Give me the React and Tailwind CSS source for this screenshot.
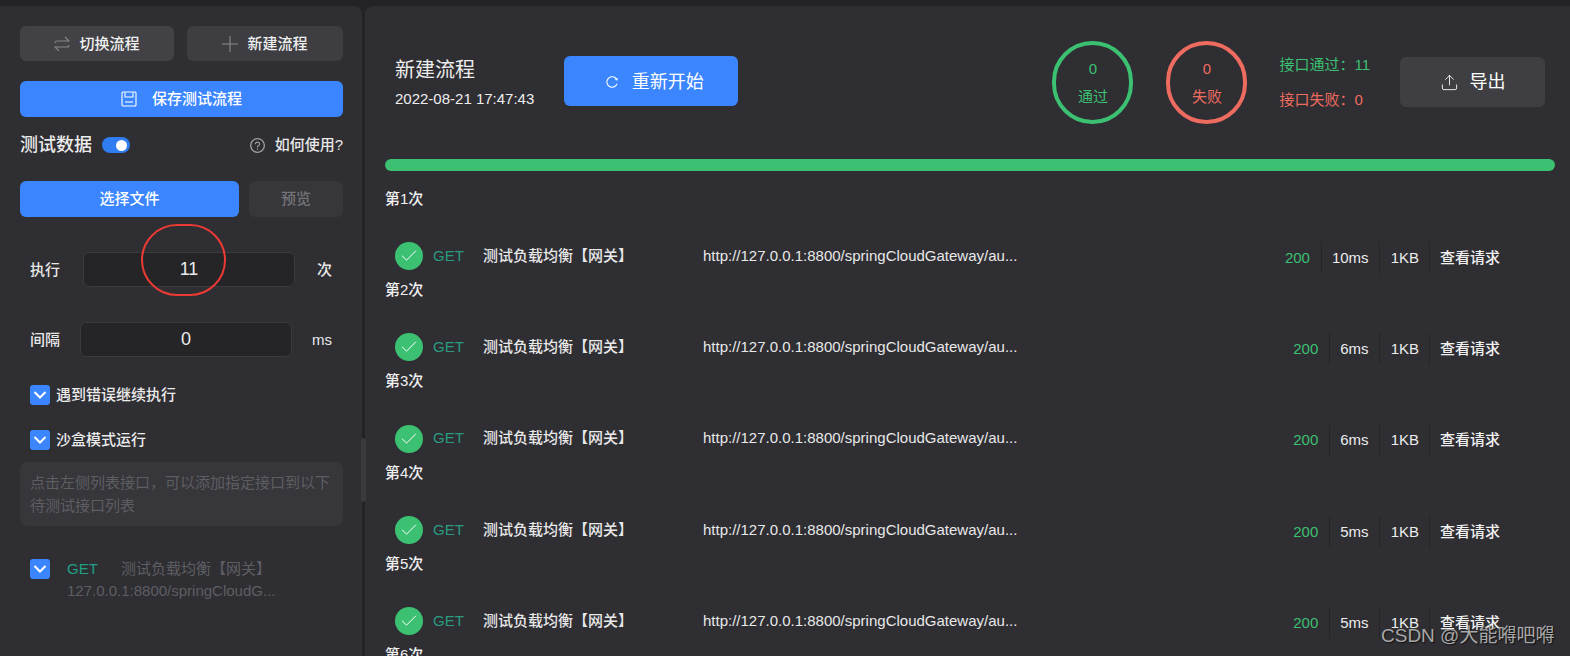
import { Check, Upload } from "lucide-react";
import { AiOutlineQuestionCircle, AiOutlineReload } from "react-icons/ai";

const runs = [
  { label: "第1次", time: "10ms" },
  { label: "第2次", time: "6ms" },
  { label: "第3次", time: "6ms" },
  { label: "第4次", time: "5ms" },
  { label: "第5次", time: "5ms" },
  { label: "第6次", time: "5ms" },
];

function SwapIcon() {
  return (
    <svg width="16" height="16" viewBox="0 0 16 16" fill="none" stroke="#85858a" strokeWidth="1.1">
      <path d="M1 7C1 5.5 2 5 3 5H15L11 1" />
      <path d="M15 9C15 10.5 14 11 13 11H1L5 15" />
    </svg>
  );
}

function SaveIcon() {
  return (
    <svg width="16" height="16" viewBox="0 0 16 16" fill="none" stroke="currentColor" strokeWidth="1.1">
      <rect x="1" y="1" width="14" height="14" rx="1" />
      <path d="M4 1.5V6H12V1.5" />
      <path d="M4 11H12" />
    </svg>
  );
}

function PlusIcon() {
  return (
    <svg width="16" height="16" viewBox="0 0 16 16" fill="none" stroke="#8c8c90" strokeWidth="1.1">
      <path d="M8 0V16M0 8H16" />
    </svg>
  );
}

function Tick() {
  return (
    <span className="flex h-5 w-5 shrink-0 items-center justify-center rounded-[3px] bg-[#3b86ff]">
      <svg width="14" height="10" viewBox="0 0 14 10" fill="none" stroke="white" strokeWidth="2">
        <path d="M1.5 2L7 7.5L12.5 2" />
      </svg>
    </span>
  );
}

function Run({ label, time }) {
  return (
    <div className="h-[91.25px] shrink-0">
      <div className="flex h-5 items-center text-[15px] font-medium text-[#f0f0f0]">{label}</div>
      <div className="mt-[31px] flex h-8 items-center text-[15px]">
        <span className="ml-[10px] flex h-7 w-7 items-center justify-center rounded-full bg-[#3cc071]">
          <Check size={20} strokeWidth={1.2} color="white" />
        </span>
        <span className="ml-[10px] w-[50px] text-[#2b9b80]">GET</span>
        <span className="w-[220px] font-medium text-[#e8e8e8]">测试负载均衡【网关】</span>
        <span className="font-medium text-[#e8e8e8]">http://127.0.0.1:8800/springCloudGateway/au...</span>
        <div className="ml-auto mt-[4px] flex h-8 items-center">
          <span className="pr-[11px] text-[#3cc071]">200</span>
          <span className="flex h-8 items-center border-l border-[#26262a] pl-[10px] pr-[10px] font-medium text-[#ececec]">{time}</span>
          <span className="flex h-8 items-center border-l border-[#26262a] pl-[11px] pr-[10px] font-medium text-[#ececec]">1KB</span>
          <span className="flex h-8 items-center border-l border-[#26262a] pl-[10px] pr-[55px] font-medium text-[#f0f0f0]">查看请求</span>
        </div>
      </div>
    </div>
  );
}

export default function App() {
  return (
    <div className="relative flex h-[656px] w-[1570px] gap-[3px] overflow-hidden bg-[#232326] pt-[6px] font-['Liberation_Sans','Noto_Sans_CJK_SC',sans-serif]">
      {/* left panel */}
      <aside className="relative h-full w-[362px] shrink-0 rounded-tr-lg bg-[#2e2e33] pt-5">
        <div className="flex gap-[13px] px-5 pr-[19px]">
          <button className="flex h-[35px] w-[154px] items-center justify-center gap-[9px] rounded-md bg-[#414146] pt-[1px] text-[15px] font-medium text-[#f0f0f0]">
            <SwapIcon />
            切换流程
          </button>
          <button className="flex h-[35px] w-[156px] items-center justify-center gap-[9px] rounded-md bg-[#3d3d42] pt-[1px] text-[15px] font-medium text-[#f0f0f0]">
            <PlusIcon />
            新建流程
          </button>
        </div>
        <div className="mt-5 px-5 pr-[19px]">
          <button className="flex h-[36px] w-full items-center justify-center gap-[15px] rounded-md bg-[#3b86ff] text-[15px] font-medium text-white">
            <SaveIcon />
            保存测试流程
          </button>
        </div>
        <div className="mt-[17px] flex h-[22px] items-center pl-5 pr-[19px]">
          <span className="text-lg font-medium text-[#ececec]">测试数据</span>
          <span className="ml-[10px] flex h-4 w-7 items-center justify-end rounded-full bg-[#2f7df0] pr-[3px]">
            <span className="h-[11px] w-[11px] rounded-full bg-white" />
          </span>
          <AiOutlineQuestionCircle size={17} className="ml-auto text-[#a0a0a4]" />
          <span className="ml-[9px] text-[15px] font-medium text-[#e8e8e8]">如何使用?</span>
        </div>
        <div className="mt-[25px] flex gap-[10px] pl-5 pr-[19px]">
          <button className="h-9 w-[219px] rounded-md bg-[#3b86ff] text-[15px] font-medium text-white">选择文件</button>
          <button className="h-9 w-[94px] rounded-md bg-[#36363b] text-[15px] font-medium text-[#747478]">预览</button>
        </div>
        <div className="mt-[35px] flex h-[35px] items-center text-[15px] font-medium text-[#e8e8e8]">
          <span className="ml-[30px] w-[53px] pt-[2px]">执行</span>
          <input readOnly value="11" className="h-[35px] w-[212px] rounded-md border border-[#3a3a3f] bg-[#252528] pb-[1px] text-center text-lg text-[#ececec] outline-none" />
          <span className="ml-[22px] pt-[2px]">次</span>
        </div>
        <div className="mt-[35px] flex h-[35px] items-center text-[15px] font-medium text-[#e8e8e8]">
          <span className="ml-[30px] w-[50px] pt-[2px]">间隔</span>
          <input readOnly value="0" className="h-[35px] w-[212px] rounded-md border border-[#3a3a3f] bg-[#252528] text-center text-lg text-[#ececec] outline-none" />
          <span className="ml-[20px] pt-[2px]">ms</span>
        </div>
        <label className="ml-[30px] mt-[28px] flex h-5 items-center gap-[6px] text-[15px] font-medium text-[#ececec]">
          <Tick />
          遇到错误继续执行
        </label>
        <label className="ml-[30px] mt-[25px] flex h-5 items-center gap-[6px] text-[15px] font-medium text-[#ececec]">
          <Tick />
          沙盒模式运行
        </label>
        <div className="ml-5 mt-[12px] h-16 w-[323px] rounded-lg bg-[#36363b] px-[10px] py-[9px] text-[15px] leading-[23px] text-[#5e5e62]">
          点击左侧列表接口，可以添加指定接口到以下待测试接口列表
        </div>
        <div className="ml-[30px] mt-[33px] flex text-[15px] text-[#5e5e62]">
          <Tick />
          <div className="ml-[17px]">
            <div className="flex leading-[20px]">
              <span className="w-[54px] text-[#21a085]">GET</span>
              <span>测试负载均衡【网关】</span>
            </div>
            <div className="mt-[2px] leading-[20px]">127.0.0.1:8800/springCloudG...</div>
          </div>
        </div>
        {/* annotation circle around the run count */}
        <div className="absolute left-[141px] top-[218px] h-[72px] w-[85px] rounded-full border-[2.5px] border-[#ec3a34]" />
        <div className="absolute left-[361px] top-[432px] h-[64px] w-[5px] rounded-full bg-[#3a3a3d]" />
      </aside>

      {/* right panel */}
      <main className="flex min-w-0 flex-1 flex-col overflow-hidden rounded-tl-lg bg-[#2e2e33] pl-5 pr-[15px]">
        <header className="flex h-[153px] shrink-0 items-start">
          <div className="ml-[10px] mt-[50px] text-[#eeeeee]">
            <div className="text-xl leading-7">新建流程</div>
            <div className="mt-[5px] text-[15px] leading-5">2022-08-21 17:47:43</div>
          </div>
          <button className="ml-[30px] mt-[50px] flex h-[50px] w-[174px] items-center justify-center gap-[13px] rounded-md bg-[#3b86ff] pl-[6px] pt-[2px] text-lg text-white">
            <AiOutlineReload size={14} />
            重新开始
          </button>
          <div className="ml-auto mt-[35px] flex h-[83px] w-[81px] flex-col items-center justify-center gap-[5px] rounded-full border-[4px] border-[#3cc071] pt-[1px] text-[15px] text-[#3cc071]">
            <span>0</span>
            <span>通过</span>
          </div>
          <div className="ml-[33px] mt-[35px] flex h-[83px] w-[81px] flex-col items-center justify-center gap-[5px] rounded-full border-[4px] border-[#ee6b5f] pt-[1px] text-[15px] text-[#ee6b5f]">
            <span>0</span>
            <span>失败</span>
          </div>
          <div className="ml-[32px] mt-[49px] text-[15px] leading-5">
            <div className="text-[#3cc071]">接口通过：11</div>
            <div className="mt-[15px] text-[#ee6b5f]">接口失败：0</div>
          </div>
          <button className="ml-[30px] mr-[10px] mt-[51px] flex h-[50px] w-[145px] items-center justify-center gap-[11px] rounded-md bg-[#3e3e43] text-lg text-white">
            <Upload size={19} strokeWidth={1.1} />
            导出
          </button>
        </header>
        <div className="h-3 shrink-0 rounded-full bg-[#3cc071]" />
        <div className="mt-[18px] flex flex-col">
          {runs.map((run) => (
            <Run key={run.label} label={run.label} time={run.time} />
          ))}
        </div>
      </main>

      <div className="absolute left-[1381px] top-[624px] text-[19px] leading-[24px] text-[#a8a8a8] [text-shadow:1px_1px_1px_#111]">
        CSDN @大能嘚吧嘚
      </div>
    </div>
  );
}
